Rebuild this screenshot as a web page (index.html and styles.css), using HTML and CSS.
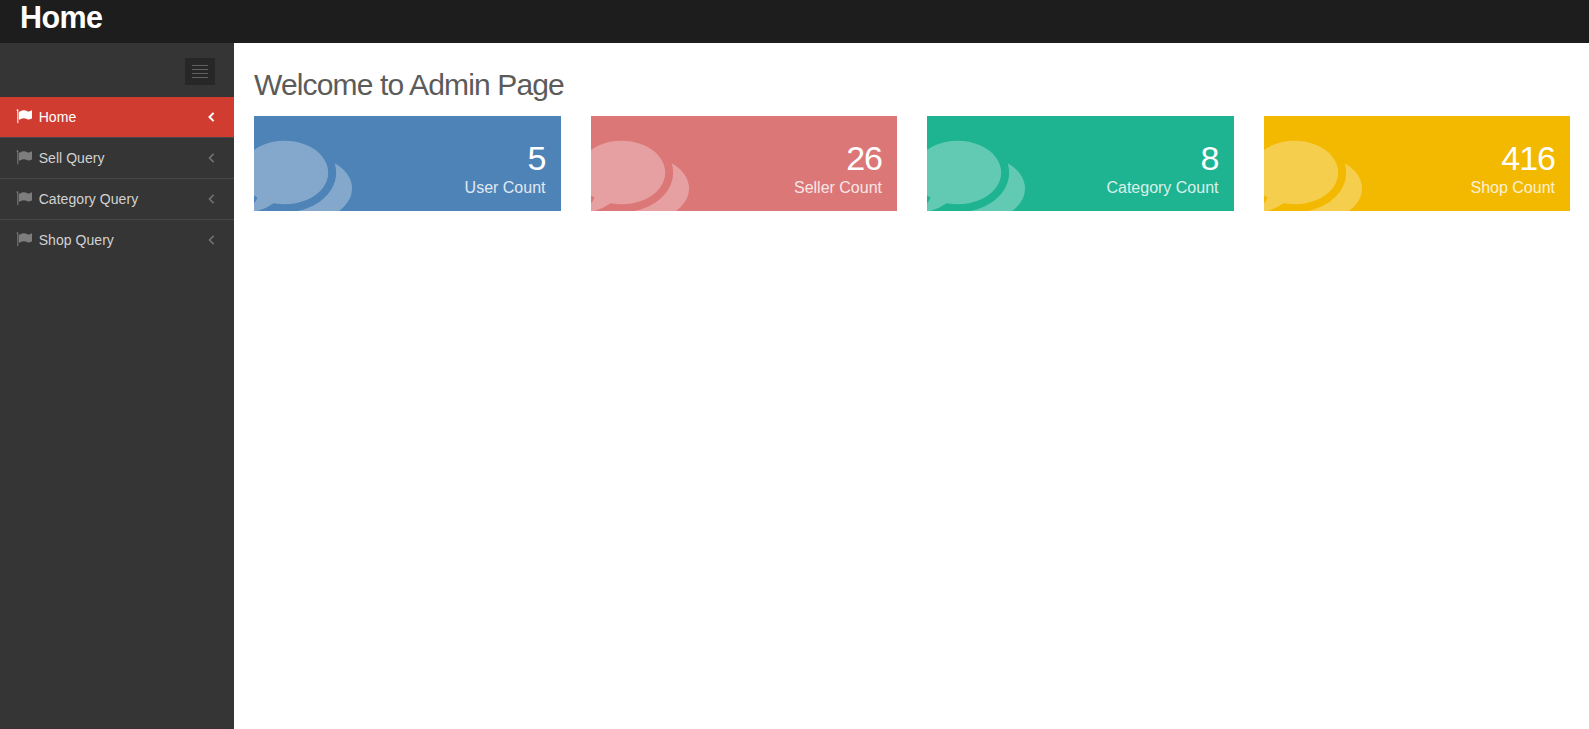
FILE: index.html
```html
<!DOCTYPE html>
<html lang="en">
<head>
<meta charset="utf-8">
<title>Home</title>
<link rel="stylesheet" href="styles.css">
</head>
<body>
<svg class="defs" aria-hidden="true">
  <symbol id="comments" viewBox="0 0 1792 1792"><path d="M1408 768q0 139-94 257t-256.5 186.5-353.5 68.5q-86 0-176-16-124 88-278 128-36 9-86 16h-3q-11 0-20.5-8t-11.500-21q-1-3-1-6.500t.5-6.500 2-6l2.500-5 3.500-5.500 4-5 4.500-5 4-4.500q5-6 23-25t26-29.500 22.500-29 25-38.500 20.500-44q-124-72-195-177t-71-224q0-139 94-257t256.500-186.500 353.500-68.500 353.500 68.500 256.500 186.500 94 257zm384 256q0 120-71 224.500t-195 176.500q10 24 20.500 44t25 38.500 22.500 29 26 29.500 23 25q1 1 4 4.500t4.500 5 4 5 3.500 5.500l2.500 5 2 6 .5 6.500-1 6.500q-3 14-13 22t-22 7q-50-7-86-16-154-40-278-128-90 16-176 16-271 0-472-132 58 4 88 4 161 0 309-45t264-129q125-92 192-212t67-254q0-77-23-152 129 71 204 178t75 230z"/></symbol>
  <symbol id="flag" viewBox="0 0 1792 1792"><path d="M256 200v1432q0 32-32 32h-50q-32 0-32-32V340q-78-30-78-106 0-106 96-106t96 72zm1536 120v763q0 25-12.500 38.500t-39.500 27.500q-215 116-369 116-61 0-123.500-22t-108.500-48-115.500-48-142.500-22q-192 0-464 146-17 9-33 9-26 0-45-19t-19-45v-742q0-32 31-55 21-14 79-43 236-120 421-120 107 0 200 29t219 88q38 19 88 19 54 0 117.500-21t110-47 88-47 54.500-21q26 0 45 19t19 45z"/></symbol>
  <symbol id="angle" viewBox="0 0 7 10"><path d="M5.600 .9L1.500 5l4.100 4.100"/></symbol>
</svg>
<header class="header"><span class="brand">Home</span></header>
<div class="layout">
  <nav class="sidebar">
    <div class="toggle-row"><div class="toggler"><i></i><i></i><i></i><i></i></div></div>
    <ul class="menu">
      <li class="item active"><svg class="flag"><use href="#flag"/></svg><span class="name">Home</span><svg class="angle"><use href="#angle"/></svg></li>
      <li class="item"><svg class="flag"><use href="#flag"/></svg><span class="name">Sell Query</span><svg class="angle"><use href="#angle"/></svg></li>
      <li class="item"><svg class="flag"><use href="#flag"/></svg><span class="name">Category Query</span><svg class="angle"><use href="#angle"/></svg></li>
      <li class="item"><svg class="flag"><use href="#flag"/></svg><span class="name">Shop Query</span><svg class="angle"><use href="#angle"/></svg></li>
    </ul>
  </nav>
  <main class="content">
    <h1 class="title">Welcome to Admin Page</h1>
    <div class="cards">
      <section class="card blue"><svg class="bubbles"><use href="#comments"/></svg><div class="number">5</div><div class="label">User Count</div></section>
      <section class="card red"><svg class="bubbles"><use href="#comments"/></svg><div class="number">26</div><div class="label">Seller Count</div></section>
      <section class="card green"><svg class="bubbles"><use href="#comments"/></svg><div class="number">8</div><div class="label">Category Count</div></section>
      <section class="card yellow"><svg class="bubbles"><use href="#comments"/></svg><div class="number">416</div><div class="label">Shop Count</div></section>
    </div>
  </main>
</div>
</body>
</html>
```
FILE: styles.css
```css
* { box-sizing: border-box; }
body {
  margin: 0;
  height: 100vh;
  display: flex;
  flex-direction: column;
  overflow: hidden;
  background: #fff;
  font-family: "Liberation Sans", Arial, sans-serif;
}
.defs { display: none; }
.header {
  height: 43px;
  flex: none;
  padding-left: 19px;
  background: #1d1d1d;
}
.brand {
  display: block;
  padding-left: 1px;
  color: #fff;
  font-size: 30.5px;
  line-height: 35px;
  font-weight: 700;
  letter-spacing: -0.6px;
}
.layout { flex: 1; display: flex; }
.sidebar {
  width: 234px;
  flex: none;
  background: #353535;
  border-bottom: 1px solid #3a2e31;
}
.toggle-row {
  height: 54px;
  display: flex;
  justify-content: flex-end;
  padding: 15px 19px 0 0;
}
.toggler {
  width: 30px;
  height: 27px;
  padding: 7px;
  display: flex;
  flex-direction: column;
  gap: 3px;
  background: #272727;
}
.toggler i { height: 1px; background: #606060; }
.menu { list-style: none; margin: 0; padding: 0; }
.item {
  height: 41px;
  display: flex;
  align-items: flex-start;
  padding: 11px 19px 0 16px;
  border-bottom: 1px solid #484848;
  color: #d2d2d2;
  font-size: 14px;
}
.item:last-child { border-bottom: 0; }
.item.active { background: #d03c2f; color: #fff; }
.flag { width: 16.300px; height: 16.300px; fill: #7d7d7d; }
.name { flex: 1; margin-left: 6.400px; line-height: 18px; letter-spacing: 0.05px; }
.angle {
  width: 7px;
  height: 10px;
  margin-top: 4px;
  fill: none;
  stroke: #727272;
  stroke-width: 1.6;
}
.active .flag { fill: #fff; }
.active .angle { stroke: #fff; stroke-width: 2; }
.content { flex: 1; padding: 22px 19px 0 20px; }
.title {
  margin: 0;
  height: 51px;
  color: #5b5b5b;
  font-size: 30px;
  line-height: 39px;
  font-weight: 400;
  letter-spacing: -0.86px;
}
.cards { display: grid; grid-template-columns: repeat(4, 1fr); gap: 30px; }
.card {
  position: relative;
  height: 95px;
  overflow: hidden;
  padding: 23px 15px 0 0;
  text-align: right;
  color: #fff;
}
.blue { background: #4e83b7; }
.red { background: #dc7778; }
.green { background: #1eb391; }
.yellow { background: #f2b900; }
.bubbles {
  position: absolute;
  left: -13px;
  top: 9.200px;
  width: 111px;
  height: 111px;
  fill: #fff;
  opacity: 0.3;
}
.number { font-size: 34px; line-height: 38px; letter-spacing: -1px; }
.label { font-size: 16px; line-height: 22px; opacity: 0.82; }
```
